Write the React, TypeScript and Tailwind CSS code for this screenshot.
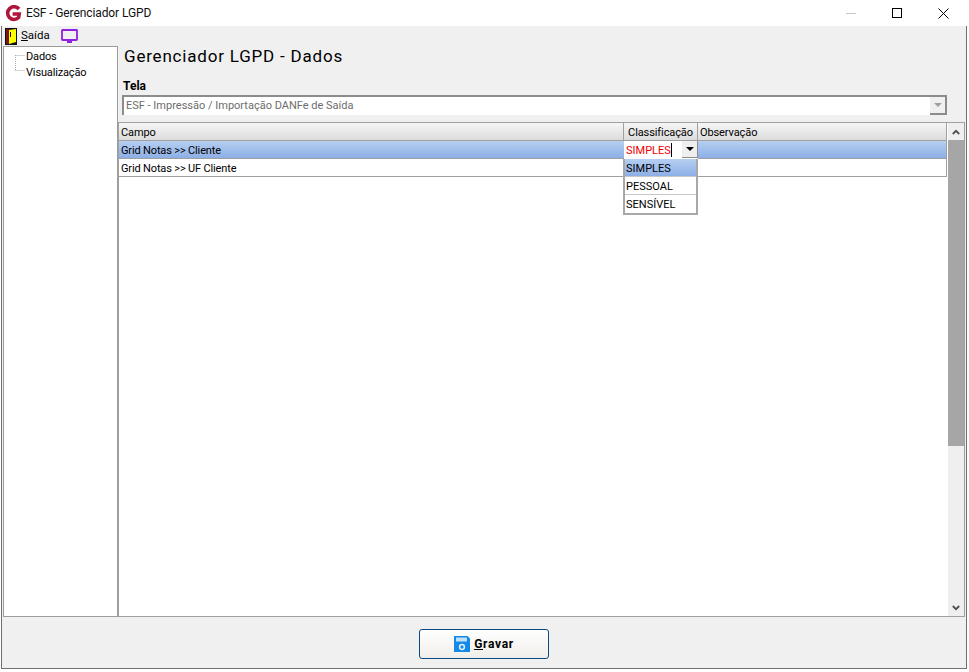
import React from "react";

const font = { fontFamily: 'Roboto, "Liberation Sans", Arial, sans-serif' };

function Logo() {
  return (
    <svg width="17" height="17" viewBox="0 0 17 17" className="shrink-0">
      <path d="M14 4 A6.4 6.4 0 1 0 13.6 12.6 L14.2 9 H7.6" fill="none" stroke="#b0163c" strokeWidth="3.6" />
    </svg>
  );
}

function DoorIcon() {
  return (
    <svg width="12" height="17" viewBox="0 0 12 17" className="shrink-0">
      <rect x="0" y="0" width="12" height="17" fill="#111" />
      <rect x="1" y="1" width="3" height="15" fill="#7d1414" />
      <path d="M4 2 L11 1 V14 L4 16 Z" fill="#ffff00" />
      <rect x="5" y="4" width="1" height="5" fill="#111" />
    </svg>
  );
}

function ScreenIcon() {
  return (
    <svg width="17" height="14" viewBox="0 0 17 14" className="shrink-0">
      <rect x="1" y="1" width="15" height="10" rx="0.5" fill="none" stroke="#8e22e0" strokeWidth="1.8" />
      <rect x="6" y="12" width="5" height="2" fill="#8e22e0" />
    </svg>
  );
}

function SaveIcon() {
  return (
    <svg width="16" height="16" viewBox="0 0 16 16" className="shrink-0">
      <path d="M0 0 H13.5 L16 2.5 V16 H0 Z" fill="#1589e8" />
      <rect x="2" y="1.5" width="11" height="4" fill="#bfe0f8" />
      <circle cx="8" cy="11" r="2.4" fill="none" stroke="#e3f1fb" strokeWidth="1.5" />
    </svg>
  );
}

function Chevron({ up }: { up?: boolean }) {
  return (
    <svg width="8" height="6" viewBox="0 0 8 6">
      <path d={up ? "M0.8 5 L4 1.8 L7.2 5" : "M0.8 1 L4 4.2 L7.2 1"} fill="none" stroke="#505050" strokeWidth="1.8" />
    </svg>
  );
}

function TreeLines() {
  return (
    <svg width="11" height="32" viewBox="0 0 11 32" className="shrink-0">
      <path d="M0.5 8 V24 M0.5 8.5 H10 M0.5 23.5 H10" fill="none" stroke="#a8a8a8" strokeWidth="1" strokeDasharray="1 1" />
    </svg>
  );
}

function Row({ campo, selected }: { campo: string; selected?: boolean }) {
  const cls = selected
    ? "bg-gradient-to-b from-[#b6cff1] to-[#8dafe6]"
    : "bg-white";
  return (
    <div className={`flex h-[18px] border-b border-r border-[#a0a0a0] text-[11px] leading-[19px] tracking-[-0.15px] text-black ${cls}`}>
      <div className="w-[505px] pl-[2px] shrink-0">{campo}</div>
    </div>
  );
}

export default function App() {
  return (
    <div className="w-[969px] h-[672px] bg-white overflow-hidden text-black flex flex-col" style={font}>
      {/* title bar */}
      <div className="h-[26px] w-[967px] bg-white flex items-center pl-[5px] shrink-0">
        <Logo />
        <span className="ml-[4px] text-[12px] tracking-[-0.1px] text-[#111]">ESF - Gerenciador LGPD</span>
        <div className="ml-auto flex items-center h-full pr-[1px]">
          <div className="w-[46px] flex justify-center"><div className="w-[10px] h-px bg-[#c8c8c8]" /></div>
          <div className="w-[46px] flex justify-center"><div className="w-[10px] h-[10px] border border-black" /></div>
          <div className="w-[46px] flex justify-center">
            <svg width="11" height="11" viewBox="0 0 11 11"><path d="M0.5 0.5 L10.5 10.5 M10.5 0.5 L0.5 10.5" stroke="#000" strokeWidth="1" /></svg>
          </div>
        </div>
      </div>
      {/* window frame */}
      <div className="ml-[1px] w-[966px] h-[643px] flex flex-col border-l border-r border-b border-[#707070] bg-[#f0f0f0] pl-[1px] pr-[1px]">
        {/* menu */}
        <div className="h-[20px] flex items-center pl-[2px] shrink-0">
          <DoorIcon />
          <span className="ml-[4px] text-[11.5px]"><span className="underline">S</span>aída</span>
          <span className="ml-[11px] flex"><ScreenIcon /></span>
        </div>
        {/* body */}
        <div className="h-[571px] flex shrink-0">
          <div className="w-[115px] bg-white border border-[#9c9c9c] shrink-0 pl-[11px] text-[11px] leading-[16px] tracking-[-0.15px] flex">
            <TreeLines />
            <div className="pt-[2px]">
              <div>Dados</div>
              <div>Visualização</div>
            </div>
          </div>
          <div className="flex-1 flex flex-col min-w-0">
            <div className="pl-[6px] text-[17px] leading-[20px] tracking-[0.8px] h-[33px]">Gerenciador LGPD - Dados</div>
            <div className="pl-[5px] text-[12px] font-bold leading-[14px] h-[16px]">Tela</div>
            <div className="ml-[4px] mr-[18px] h-[20px] bg-white border-2 border-[#8c8c8c] border-r-0 border-b-0 flex items-center pl-[2px] text-[11px] text-[#6d6d6d]">
              <span className="flex-1">ESF - Impressão / Importação DANFe de Saída</span>
              <div className="w-[17px] h-[18px] bg-[#f0f0f0] border-r-2 border-b-2 border-[#8c8c8c] flex items-center justify-center">
                <div className="w-0 h-0 border-l-[4px] border-r-[4px] border-t-[4px] border-l-transparent border-r-transparent border-t-[#a0a0a0]" />
              </div>
            </div>
            {/* grid */}
            <div className="relative h-[495px] mt-[7px] bg-white border border-[#a0a0a0] flex min-h-0">
              <div className="flex-1 flex flex-col min-w-0 pr-[1px]">
                <div className="flex h-[18px] border-b border-r border-[#a0a0a0] bg-gradient-to-b from-[#f6f6f6] to-[#dcdcdc] text-[11px] leading-[19px] tracking-[-0.1px] shrink-0">
                  <div className="w-[505px] pl-[2px] border-r border-[#a0a0a0] shrink-0">Campo</div>
                  <div className="w-[74px] text-center border-r border-[#a0a0a0] shrink-0">Classificação</div>
                  <div className="pl-[2px]">Observação</div>
                </div>
                <Row campo="Grid Notas >> Cliente" selected />
                <Row campo="Grid Notas >> UF Cliente" />
              </div>
              <div className="w-[16px] bg-[#efefef] flex flex-col shrink-0">
                <div className="h-[17px] flex items-center justify-center">
                  <Chevron up />
                </div>
                <div className="h-[306px] bg-[#a6a6a6]" />
                <div className="flex-1" />
                <div className="h-[17px] flex items-center justify-center">
                  <Chevron />
                </div>
              </div>
              {/* editor + dropdown overlay */}
              <div className="absolute left-[504px] top-[18px] w-[75px] text-[11px]">
                <div className="ml-[1px] h-[18px] flex bg-white text-[#f00000] leading-[19px] pl-[2px]">
                  <span>SIMPLES</span>
                  <span className="w-px h-[14px] bg-black mt-[2px]" />
                  <div className="ml-auto w-[16px] h-[17px] bg-[#efefef] border-r border-b border-[#8c8c8c] flex items-center justify-center">
                    <div className="w-0 h-0 border-l-[4px] border-r-[4px] border-t-[4px] border-l-transparent border-r-transparent border-t-black" />
                  </div>
                </div>
                <div className="border-2 border-t-0 border-[#a8a8a8] bg-white leading-[19px]">
                  <div className="h-[18px] pl-[1px] border-b border-[#c8c8c8] bg-gradient-to-b from-[#b6cff1] to-[#8dafe6]">SIMPLES</div>
                  <div className="h-[18px] pl-[1px] border-b border-[#c8c8c8]">PESSOAL</div>
                  <div className="h-[18px] pl-[1px]">SENSÍVEL</div>
                </div>
              </div>
            </div>
          </div>
        </div>
        {/* footer */}
        <div className="flex-1 flex items-start justify-center">
          <button className="mt-[12px] w-[130px] h-[30px] rounded-[3px] border border-[#0b4a82] bg-gradient-to-b from-white to-[#f0eeea] flex items-center justify-center gap-[4px] text-[12px] font-bold tracking-[0.7px]">
            <SaveIcon />
            <span><span className="underline">G</span>ravar</span>
          </button>
        </div>
      </div>
    </div>
  );
}
